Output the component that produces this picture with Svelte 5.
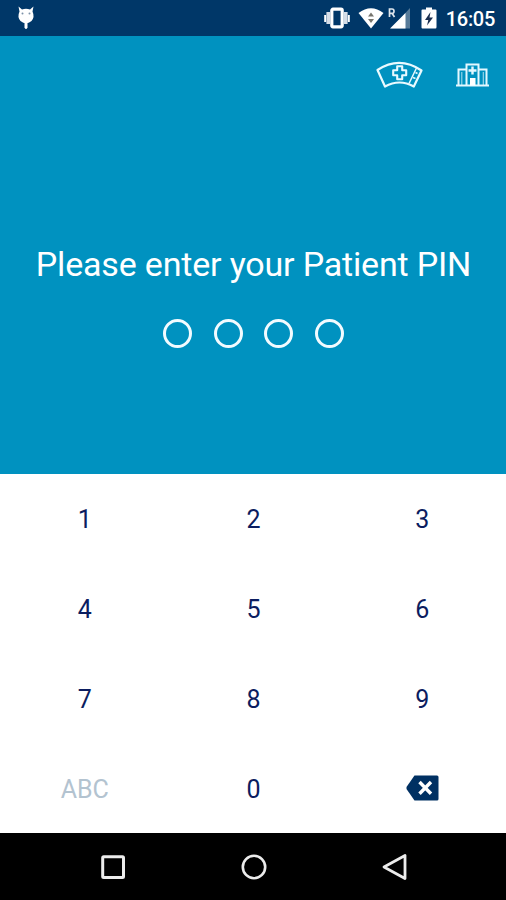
<script>
    const pinLength = 4;
    const keys = ['1', '2', '3', '4', '5', '6', '7', '8', '9', 'ABC', '0', 'del'];

    let pin = '';

    // add a digit or remove the last one
    const press = (key) => {
        if (key === 'del') {
            pin = pin.slice(0, -1);
        } else if (key !== 'ABC' && pin.length < pinLength) {
            pin = pin + key;
        }
    };
</script>

<style>
    :global(body) {
        margin: 0;
    }

    .screen {
        display: flex;
        flex-direction: column;
        height: 900px;
        overflow: hidden;
        font-family: Roboto, sans-serif;
        background-color: #fff;
    }

    svg {
        display: block;
    }

    .status {
        display: flex;
        align-items: center;
        box-sizing: border-box;
        height: 36px;
        padding: 0 11px 0 17px;
        background-color: #003768;
        color: #fff;
    }

    .status-right {
        display: flex;
        align-items: center;
        margin-left: auto;
    }

    .vibrate {
        margin-right: 8px;
    }

    .wifi {
        margin-right: 4px;
    }

    .signal {
        margin-right: 10px;
    }

    .time {
        margin: 2px 0 0 9px;
        font-size: 20px;
        font-weight: 500;
        line-height: 24px;
        letter-spacing: -0.3px;
    }

    .top {
        height: 438px;
        background-color: #0092c0;
        color: #fff;
    }

    .actions {
        display: flex;
        justify-content: flex-end;
        gap: 33px;
        padding: 24px 17px 0 0;
    }

    h1 {
        margin: 154px 0 0;
        padding-left: 1px;
        font-size: 34px;
        font-weight: 400;
        line-height: 40px;
        letter-spacing: -0.18px;
        text-align: center;
        white-space: nowrap;
    }

    .dots {
        display: flex;
        justify-content: center;
        gap: 21.6px;
        margin-top: 35px;
        padding-left: 1px;
    }

    .dot {
        box-sizing: border-box;
        width: 29px;
        height: 29px;
        border: 3px solid #f2fbff;
        border-radius: 50%;
    }

    .filled {
        background-color: #fff;
    }

    .keypad {
        display: grid;
        grid-template-columns: repeat(3, 1fr);
        grid-template-rows: repeat(4, 1fr);
        height: 359px;
    }

    button {
        display: flex;
        justify-content: center;
        align-items: center;
        padding: 2px 0 0 1px;
        border: none;
        background: none;
        color: #0b1d60;
        font-family: inherit;
        font-size: 25px;
        cursor: pointer;
    }

    .abc {
        color: #b3c3d0;
    }

    .del {
        padding: 0 0 1px 2px;
    }

    .nav {
        display: grid;
        grid-template-columns: repeat(3, 1fr);
        place-items: center;
        box-sizing: border-box;
        height: 67px;
        padding: 0 41px 0 43px;
        background-color: #000;
    }
</style>

<div class="screen">
    <div class="status">
        <svg width="18" height="24" viewBox="0 0 18 24" fill="#fff">
            <path d="M1.5 .5L5 3.5Q9 2 13 3.5L16.5 .5L15.5 5.5Q18 11 14.5 15Q9 19.5 3.5 15Q0 11 2.5 5.5Z" />
            <path d="M7.5 16h3v5.5q-1.5 3-3 0z" />
            <circle cx="5.5" cy="7.5" r="1" fill="#7c91a8" />
            <circle cx="12.5" cy="7.5" r="1" fill="#7c91a8" />
        </svg>
        <div class="status-right">
            <svg class="vibrate" width="26" height="22" viewBox="0 0 26 22">
                <path d="M1.2 8v7M24.8 8v7" stroke="#fff" stroke-width="2" />
                <path d="M4.2 5v12M21.8 5v12" stroke="#d5dde7" stroke-width="3.6" />
                <rect x="7.8" y="2.2" width="10.4" height="17.6" rx="1.2" fill="none" stroke="#fff" stroke-width="3.2" />
            </svg>
            <svg class="wifi" width="26" height="22" viewBox="0 0 26 22">
                <path d="M.5 6Q13-3.5 25.5 6L13 21.5Z" fill="#fff" />
                <path d="M10 9.5L13 5.5L16 9.5ZM10 12L13 16L16 12Z" fill="#77756e" />
            </svg>
            <svg class="signal" width="23" height="22" viewBox="0 0 23 22">
                <path d="M22 1V21.5H3Z" fill="#577b99" />
                <path d="M17.5 6V21.5H2Z" fill="#fff" />
                <path d="M1.5 10V2H4Q6 2 6 4.2T4 6.3H2M4 6.3L6.5 10" fill="none" stroke="#e0e7ee" stroke-width="1.7" />
            </svg>
            <svg width="16" height="22" viewBox="0 0 16 22">
                <path d="M1.5 2.5H5V.5H11V2.5H14.5Q15.5 2.5 15.5 3.5V20Q15.5 21.5 14.5 21.5H1.5Q.5 21.5 .5 20.5V3.5Q.5 2.5 1.5 2.5Z" fill="#fff" />
                <path d="M9.5 5L4 13H7.3L6 18.5L12 10.5H8.5Z" fill="#1b2f50" />
            </svg>
            <span class="time">16:05</span>
        </div>
    </div>

    <div class="top">
        <div class="actions">
            <svg width="47" height="30" viewBox="0 0 47 30" fill="none" stroke="#e9faff" stroke-width="2.2" stroke-linejoin="round">
                <path d="M1.5 10Q23.5-4.5 45.5 10.5L37.8 26.5Q23.5 18.5 9 26.5Z" />
                <path d="M40.5 8L33 23.5" stroke-width="1.5" />
                <path d="M39.5 12.5L41.5 13.5M37 17.5L39.5 18.5" stroke-width="1.6" />
                <path d="M21.2 6.2h5v4h4v5h-4v4h-5v-4h-4v-5h4z" stroke-width="2.1" />
            </svg>
            <svg width="33" height="30" viewBox="0 0 33 30" fill="none" stroke="#e3f8ff" stroke-width="2">
                <path d="M0 25.5H33M2.5 25V9.5H10M23 9.5H30.5V25M10.5 25V4.5H22.5V25" />
                <path d="M5.8 12v13M27.3 12v13" stroke-width="1.1" opacity=".7" />
                <path d="M16.5 6.5v8M12.5 10.5h8" stroke-width="2.4" />
                <rect x="14" y="18" width="5.5" height="7.5" fill="#fff" stroke="none" />
            </svg>
        </div>
        <h1>Please enter your Patient PIN</h1>
        <div class="dots">
            {#each Array(pinLength) as _, i}
                <span class="dot" class:filled={i < pin.length}></span>
            {/each}
        </div>
    </div>

    <div class="keypad">
        {#each keys as key}
            <button class:abc={key === 'ABC'} class:del={key === 'del'} aria-label={key} on:click={() => press(key)}>
                {#if key === 'del'}
                    <svg width="33" height="26" viewBox="0 0 33 26">
                        <path d="M8.5 .5H31Q32.5 .5 32.5 2V24Q32.5 25.5 31 25.5H8.5L.5 14V12Z" fill="#003062" />
                        <path d="M13.5 7L25 18.8M25 7L13.5 18.8" stroke="#fff" stroke-width="3.4" />
                    </svg>
                {:else}
                    {key}
                {/if}
            </button>
        {/each}
    </div>

    <div class="nav">
        <svg width="26" height="26" viewBox="0 0 26 26" fill="none" stroke="#ececec" stroke-width="3">
            <rect x="2.7" y="2.7" width="20.8" height="20.8" rx="1" />
        </svg>
        <svg width="26" height="26" viewBox="0 0 26 26" fill="none" stroke="#ececec" stroke-width="2.6">
            <circle cx="13" cy="13" r="11.2" />
        </svg>
        <svg width="26" height="28" viewBox="0 0 26 28" fill="none" stroke="#ececec" stroke-width="2.8" stroke-linejoin="round">
            <path d="M23 2.5V25.5L2 14Z" />
        </svg>
    </div>
</div>
